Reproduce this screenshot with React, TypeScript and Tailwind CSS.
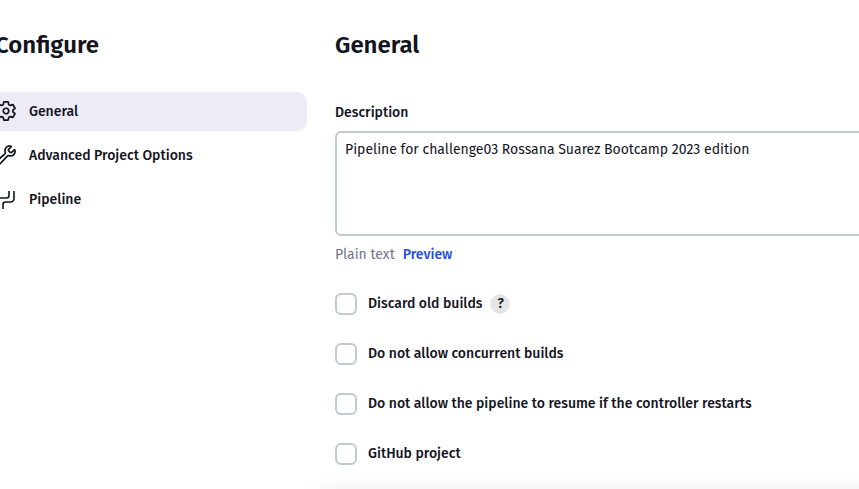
import React from "react";
import { IoBuildOutline, IoSettingsOutline } from "react-icons/io5";

function PipelineIcon({ className }: { className?: string }) {
  return (
    <svg
      viewBox="0 0 22 22"
      className={className}
      fill="none"
      stroke="currentColor"
      strokeWidth="1.6"
      aria-hidden="true"
    >
      <path d="M14 3v4.500a2.500 2.500 0 0 1-2.500 2.500H5.500a2.500 2.500 0 0 0-2.500 2.500V21" />
      <path d="M19 3v7.500a3.500 3.500 0 0 1-3.500 3.500H10.500a2.500 2.500 0 0 0-2.500 2.500V21" />
    </svg>
  );
}

const boldIcon = "size-[22px] shrink-0 [&_path]:[stroke-width:40px]";

const sections = [
  { label: "General", Icon: IoSettingsOutline, iconClass: boldIcon, active: true },
  { label: "Advanced Project Options", Icon: IoBuildOutline, iconClass: boldIcon, active: false },
  { label: "Pipeline", Icon: PipelineIcon, iconClass: "size-[22px] shrink-0", active: false },
];

const options = [
  { id: "discard", label: "Discard old builds", help: true },
  { id: "concurrent", label: "Do not allow concurrent builds", help: false },
  {
    id: "resume",
    label: "Do not allow the pipeline to resume if the controller restarts",
    help: false,
  },
  { id: "github", label: "GitHub project", help: false },
];

export default function App() {
  return (
    <div className="relative flex h-screen overflow-hidden bg-white font-['Fira_Sans','Roboto',sans-serif] text-sm text-[#14141f]">
      <aside className="-ml-4 w-[323px] shrink-0 pt-7">
        <h1 className="pl-[11px] text-2xl leading-[34px] font-semibold">Configure</h1>
        <nav className="mt-[30px] flex flex-col gap-[5px]" aria-label="Sections">
          {sections.map(({ label, Icon, iconClass, active }) => (
            <a
              key={label}
              href="#"
              aria-current={active ? "true" : undefined}
              className={`flex h-[39px] items-start gap-3 rounded-[10px] pt-2 pl-[11px] font-medium ${
                active ? "bg-[#edebf6]" : ""
              }`}
            >
              <Icon className={iconClass} />
              <span className="leading-6">{label}</span>
            </a>
          ))}
        </nav>
      </aside>

      <main className="-mr-6 ml-7 min-w-0 flex-1 pt-7">
        <h2 className="text-2xl leading-[34px] font-semibold">General</h2>
        <label htmlFor="description" className="mt-10 block leading-[22px] font-medium">
          Description
        </label>
        <textarea
          id="description"
          defaultValue="Pipeline for challenge03 Rossana Suarez Bootcamp 2023 edition"
          className="mt-[7px] block h-[105px] w-full resize-none rounded-md border-2 border-[#bfcbcf] px-2 py-1.5 leading-[22px] outline-none"
        />
        <div className="mt-2 flex gap-2 leading-[22px]">
          <span className="text-[#77738c]">Plain text</span>
          <a href="#" className="font-medium text-[#1f4fe0]">
            Preview
          </a>
        </div>
        <div className="mt-[27px] flex flex-col gap-7">
          {options.map(({ id, label, help }) => (
            <div key={id} className="flex h-[22px] items-center">
              <input
                id={id}
                type="checkbox"
                className="size-[22px] shrink-0 appearance-none rounded-md border-2 border-[#bfcbcf] bg-white checked:bg-[#1f4fe0]"
              />
              <label htmlFor={id} className="pl-[11px] leading-5 font-medium">
                {label}
              </label>
              {help && (
                <button
                  type="button"
                  aria-label="Help for Discard old builds"
                  className="ml-2 flex size-5 items-center justify-center rounded-full bg-[#e5e5e6] text-sm font-medium"
                >
                  ?
                </button>
              )}
            </div>
          ))}
        </div>
      </main>

      <div className="pointer-events-none absolute right-0 bottom-0 left-[307px] h-3 bg-linear-to-b from-transparent to-black/3 mask-l-from-95%" />
    </div>
  );
}
